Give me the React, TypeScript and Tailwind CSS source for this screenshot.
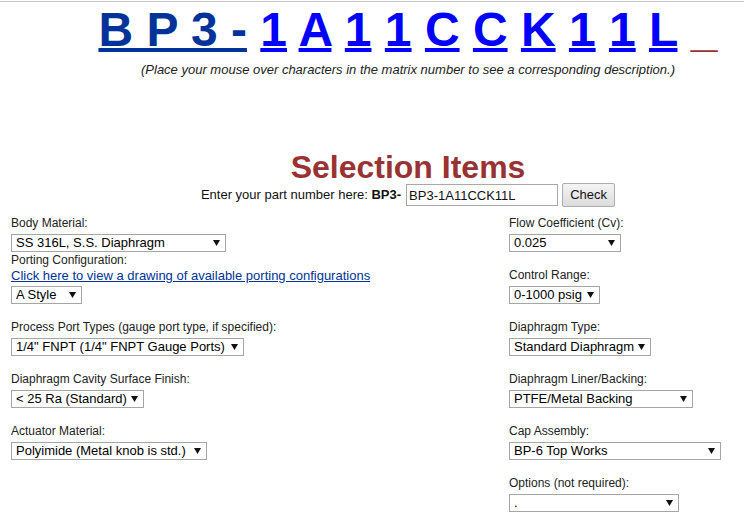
import { Fragment } from 'react';

type Field = {
  label: string;
  value: string;
  width: string;
};

const partChars = ['1', 'A', '1', '1', 'C', 'C', 'K', '1', '1', 'L'];

function Dropdown({ value, width }: { value: string; width: string }) {
  return (
    <div className={`relative mt-[3px] h-[18px] ${width}`}>
      <select
        value={value}
        onChange={() => {}}
        className="block h-full w-full appearance-none border border-[#a6a6a6] bg-white pl-[4px] pr-[16px] text-[13px] leading-[16px] text-black outline-none"
      >
        <option>{value}</option>
      </select>
      <svg
        className="pointer-events-none absolute right-[6px] top-[6px]"
        width="7"
        height="6"
        viewBox="0 0 7 6"
      >
        <path d="M0 0H7L3.5 6Z" fill="#111" />
      </svg>
    </div>
  );
}

function FieldCell({ field }: { field?: Field }) {
  if (!field) return <div />;
  return (
    <div className="flex flex-col">
      <div className="text-[12px] leading-[15px] text-[#222]">{field.label}</div>
      <Dropdown value={field.value} width={field.width} />
    </div>
  );
}

const rows: { left?: Field; right?: Field }[] = [
  {
    left: { label: 'Process Port Types (gauge port type, if specified):', value: '1/4" FNPT (1/4" FNPT Gauge Ports)', width: 'w-[233px]' },
    right: { label: 'Diaphragm Type:', value: 'Standard Diaphragm', width: 'w-[142px]' },
  },
  {
    left: { label: 'Diaphragm Cavity Surface Finish:', value: '< 25 Ra (Standard)', width: 'w-[133px]' },
    right: { label: 'Diaphragm Liner/Backing:', value: 'PTFE/Metal Backing', width: 'w-[184px]' },
  },
  {
    left: { label: 'Actuator Material:', value: 'Polyimide (Metal knob is std.)', width: 'w-[196px]' },
    right: { label: 'Cap Assembly:', value: 'BP-6 Top Works', width: 'w-[212px]' },
  },
  {
    right: { label: 'Options (not required):', value: '.', width: 'w-[170px]' },
  },
];

export default function App() {
  return (
    <div className="h-[529px] w-[744px] overflow-hidden bg-white text-black">
      <div className="w-[816px] font-['Liberation_Sans',Arial,sans-serif]">
        <div className="mt-px h-px bg-[#c8c8c8]" />

        {/* matrix number */}
        <div className="text-center text-[48px] font-bold leading-[55px]">
          <a href="#" className="text-[#003399] underline decoration-[4px]">B P 3 -</a>{' '}
          {partChars.map((c, i) => (
            <Fragment key={i}>
              <a href="#" className="text-[#0000ff] underline decoration-[4px]">{c}</a>{' '}
            </Fragment>
          ))}
          <span className="text-[#993333]">_</span>
        </div>
        <p className="mt-[5px] text-center text-[13px] italic leading-[15px] text-[#222]">
          (Place your mouse over characters in the matrix number to see a corresponding description.)
        </p>

        <h1 className="mt-[74px] text-center text-[32px] font-bold leading-[32px] text-[#993333]">Selection Items</h1>
        <div className="flex h-[24px] items-center justify-center text-[13px] text-[#111]">
          <span>
            Enter your part number here: <b>BP3-</b>
          </span>
          <input
            defaultValue="BP3-1A11CCK11L"
            className="ml-[5px] h-[22px] w-[152px] border border-[#a9a9a9] bg-white px-[2px] text-[13px] outline-none"
          />
          <button className="ml-[4px] h-[24px] w-[53px] rounded-[2px] border border-[#acacac] bg-linear-to-b from-[#f4f4f4] to-[#dcdcdc] text-[13px]">
            Check
          </button>
        </div>

        {/* selection table */}
        <div className="mt-[9px] pl-[11px]">
          <div className="grid grid-cols-[498px_1fr] items-end">
            <FieldCell field={{ label: 'Body Material:', value: 'SS 316L, S.S. Diaphragm', width: 'w-[215px]' }} />
            <FieldCell field={{ label: 'Flow Coefficient (Cv):', value: '0.025', width: 'w-[112px]' }} />
          </div>
          <div className="mt-px grid grid-cols-[498px_1fr] items-end">
            <div className="flex flex-col">
              <div className="text-[12px] leading-[15px] text-[#222]">Porting Configuration:</div>
              <a href="#" className="text-[13px] leading-[15px] text-[#003399] underline">
                Click here to view a drawing of available porting configurations
              </a>
              <Dropdown value="A Style" width="w-[71px]" />
            </div>
            <FieldCell field={{ label: 'Control Range:', value: '0-1000 psig', width: 'w-[91px]' }} />
          </div>
          {rows.map((row, i) => (
            <div key={i} className="mt-[16px] grid grid-cols-[498px_1fr] items-end">
              <FieldCell field={row.left} />
              <FieldCell field={row.right} />
            </div>
          ))}
        </div>
      </div>
    </div>
  );
}
